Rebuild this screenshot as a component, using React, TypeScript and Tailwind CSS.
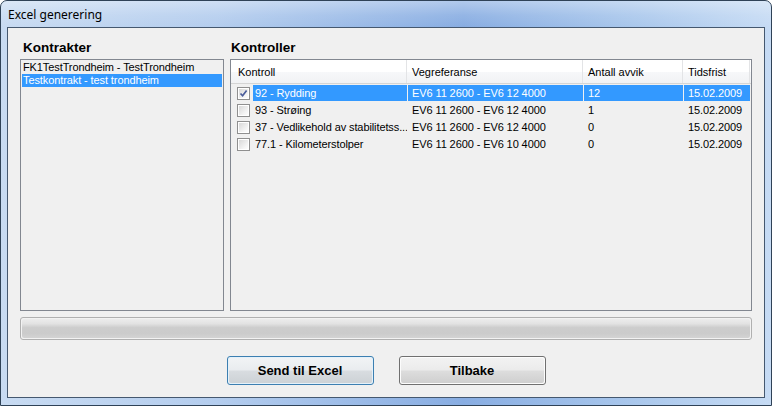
import React from 'react';

type Row = {
  kontroll: string;
  vegref: string;
  avvik: string;
  frist: string;
  checked: boolean;
  selected: boolean;
};

const rows: Row[] = [
  { kontroll: '92 - Rydding', vegref: 'EV6 11 2600 - EV6 12 4000', avvik: '12', frist: '15.02.2009', checked: true, selected: true },
  { kontroll: '93 - Strøing', vegref: 'EV6 11 2600 - EV6 12 4000', avvik: '1', frist: '15.02.2009', checked: false, selected: false },
  { kontroll: '37 - Vedlikehold av stabilitetss...', vegref: 'EV6 11 2600 - EV6 12 4000', avvik: '0', frist: '15.02.2009', checked: false, selected: false },
  { kontroll: '77.1 - Kilometerstolper', vegref: 'EV6 11 2600 - EV6 10 4000', avvik: '0', frist: '15.02.2009', checked: false, selected: false },
];

const kontrakter = ['FK1TestTrondheim - TestTrondheim', 'Testkontrakt - test trondheim'];

const CheckBox: React.FC<{ checked: boolean }> = ({ checked }) => (
  <span className="w-[13px] h-[13px] shrink-0 border border-[#8f8f8f] bg-white p-[1px] flex">
    <span className="flex-1 bg-[linear-gradient(135deg,#d8d8d8_0%,#f4f4f4_70%,#fdfdfd_100%)] flex items-center justify-center">
      {checked && (
        <svg width="9" height="9" viewBox="0 0 9 9">
          <path d="M1.5 4.5 L3.6 6.8 L7.6 1.6" fill="none" stroke="#4a5c9a" strokeWidth="1.7" />
        </svg>
      )}
    </span>
  </span>
);

const cellSel = (sel: boolean) => (sel ? 'bg-[#3399ff] text-white' : 'text-black');

export default function App() {
  return (
    <div className="w-[772px] h-[406px] flex flex-col rounded-t-[7px] border border-[#2f4257] bg-[linear-gradient(to_right,#c8dbf2_0%,#b4cdee_28%,#88ade2_60%,#a9c7ec_82%,#c6dbf4_100%)] font-['Liberation_Sans',Arial,sans-serif]">
      <div className="h-[26px] pl-[7px] flex items-center bg-[linear-gradient(to_bottom,rgba(255,255,255,0.35)_0%,rgba(255,255,255,0.1)_55%,rgba(255,255,255,0)_100%)] rounded-t-[6px]">
        <span className="text-[12px] text-black font-['Noto_Sans',sans-serif] leading-none pt-[1px]">Excel generering</span>
      </div>
      <div className="flex-1 mx-[6px] mb-[7px] border border-[#45586f] bg-[#f0f0f0] flex flex-col px-[12px] pb-[12px]">
        <div className="grid grid-cols-[204px_1fr] gap-x-[6px] pt-[12px] h-[31px]">
          <div className="pl-[3px] text-[13.5px] font-bold leading-[16px] text-black">Kontrakter</div>
          <div className="pl-[1px] text-[13.5px] font-bold leading-[16px] text-black">Kontroller</div>
        </div>
        <div className="grid grid-cols-[204px_1fr] gap-x-[6px] h-[252px]">
          <div className="border border-[#828790] bg-[#f0f0f0] p-[1px] flex flex-col">
            {kontrakter.map((k, i) => (
              <div
                key={k}
                className={`h-[13px] pl-[1px] text-[11px] leading-[13px] tracking-[-0.1px] whitespace-nowrap ${i === 1 ? 'bg-[#3399ff] text-white' : 'text-black'}`}
              >
                {k}
              </div>
            ))}
          </div>
          <div className="border border-[#828790] bg-[#f0f0f0] flex flex-col">
            <div className="h-[24px] flex border-b border-[#d5d5d5] bg-[linear-gradient(to_bottom,#ffffff_0%,#ffffff_50%,#f7f8fa_51%,#f1f2f4_100%)] text-[11px] text-black">
              <div className="w-[176px] pl-[7px] pt-[1px] flex items-center border-r border-[#e3e4e6]">Kontroll</div>
              <div className="w-[176px] pl-[5px] pt-[1px] flex items-center border-r border-[#e3e4e6]">Vegreferanse</div>
              <div className="w-[100px] pl-[5px] pt-[1px] flex items-center border-r border-[#e3e4e6]">Antall avvik</div>
              <div className="w-[67px] pl-[5px] pt-[1px] flex items-center border-r border-[#e3e4e6]">Tidsfrist</div>
            </div>
            <div className="flex flex-col text-[11px] leading-[16px] tracking-[-0.1px]">
              {rows.map((r) => (
                <div key={r.kontroll} className="h-[17px] flex items-end">
                  <div className="w-[176px] h-[16px] pl-[6px] flex items-center gap-[3px]">
                    <CheckBox checked={r.checked} />
                    <span className={`flex-1 h-[16px] pl-[2px] whitespace-nowrap overflow-hidden ${cellSel(r.selected)}`}>{r.kontroll}</span>
                  </div>
                  <div className={`w-[175px] ml-[1px] h-[16px] pl-[4px] whitespace-nowrap ${cellSel(r.selected)}`}>{r.vegref}</div>
                  <div className={`w-[99px] ml-[1px] h-[16px] pl-[4px] whitespace-nowrap ${cellSel(r.selected)}`}>{r.avvik}</div>
                  <div className={`w-[66px] ml-[1px] h-[16px] pl-[4px] whitespace-nowrap ${cellSel(r.selected)}`}>{r.frist}</div>
                </div>
              ))}
            </div>
          </div>
        </div>
        <div className="mt-[6px] h-[23px] rounded-[3px] border border-[#b0b0b0] p-[1px] bg-[#f2f2f2]">
          <div className="h-full rounded-[2px] bg-[linear-gradient(to_bottom,#ececec_0%,#e2e2e2_25%,#cdcdcd_45%,#cbcbcb_75%,#d3d3d3_100%)]" />
        </div>
        <div className="mt-[16px] flex justify-center gap-[25px]">
          <button
            type="button"
            className="w-[147px] h-[29px] rounded-[3px] border border-[#3c7fb1] p-[1px] bg-[#e4f1fa]"
          >
            <span className="flex w-full h-full items-center justify-center rounded-[2px] bg-[linear-gradient(to_bottom,#f1f3f5_0%,#e9ecef_48%,#d8dce0_52%,#cdd2d6_100%)] text-[13px] font-bold text-black">
              Send til Excel
            </span>
          </button>
          <button
            type="button"
            className="w-[147px] h-[29px] rounded-[3px] border border-[#707070] p-[1px] bg-[#fcfcfc]"
          >
            <span className="flex w-full h-full items-center justify-center rounded-[2px] bg-[linear-gradient(to_bottom,#f2f2f2_0%,#ebebeb_48%,#dddddd_52%,#cfcfcf_100%)] text-[13px] font-bold text-black">
              Tilbake
            </span>
          </button>
        </div>
      </div>
    </div>
  );
}
